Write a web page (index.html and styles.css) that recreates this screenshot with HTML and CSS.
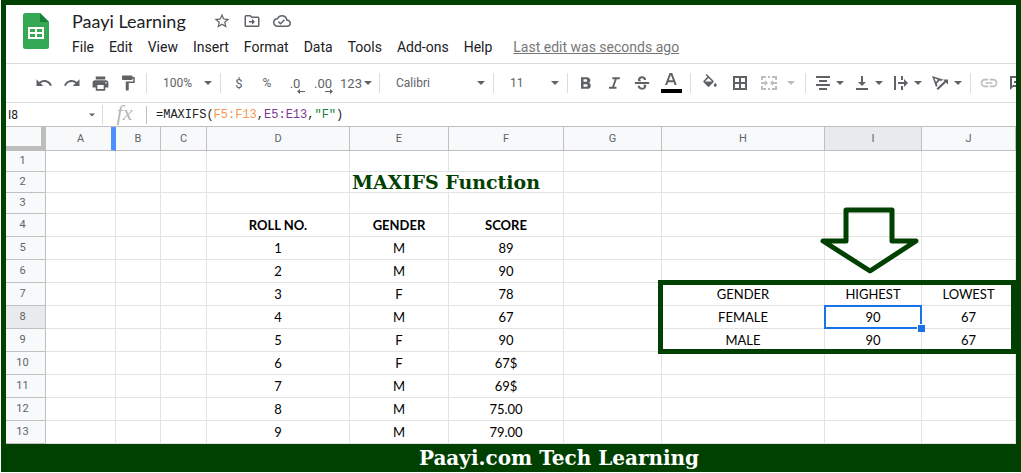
FILE: index.html
```html
<!DOCTYPE html>
<html lang="en">
<head>
<meta charset="utf-8">
<title>Paayi Learning</title>
<link rel="stylesheet" href="styles.css">
</head>
<body>
<svg class="defs" aria-hidden="true">
  <symbol id="caret" viewBox="0 0 8 4"><path d="M0 0h8L4 4z"/></symbol>
</svg>
<div class="frame">
  <header class="header">
    <svg class="logo" viewBox="0 0 26 36" aria-label="Sheets">
      <path fill="#34a853" d="M2.500 0H17l9 9v24.500a2.500 2.500 0 0 1-2.500 2.500h-21A2.500 2.500 0 0 1 0 33.500v-31A2.500 2.500 0 0 1 2.500 0z"/>
      <path fill="#188038" d="M17 0l9 9h-9z"/>
      <path fill="#fff" fill-rule="evenodd" d="M5 14h16v12H5zM7 16v3h5v-3zM14 16v3h5v-3zM7 21v3h5v-3zM14 21v3h5v-3z"/>
    </svg>
    <div class="heading">
      <div class="title-row">
        <input class="doc-title" type="text" value="Paayi Learning" aria-label="Document title">
        <button class="plain" aria-label="Star"><svg width="18" height="18" viewBox="0 0 24 24"><path d="M22 9.240l-7.190-.62L12 2 9.190 8.630 2 9.240l5.460 4.730L5.820 21 12 17.270 18.180 21l-1.630-7.030L22 9.240zM12 15.400l-3.760 2.270 1-4.280-3.320-2.880 4.380-.38L12 6.100l1.710 4.040 4.380.38-3.320 2.880 1 4.280L12 15.400z"/></svg></button>
        <button class="plain" aria-label="Move"><svg width="18" height="18" viewBox="0 0 24 24"><path d="M20 6h-8l-2-2H4a2 2 0 0 0-2 2v12a2 2 0 0 0 2 2h16a2 2 0 0 0 2-2V8a2 2 0 0 0-2-2zm0 12H4V6h5.200l2 2H20v10zM12 17l4-4-4-4v3H8v2h4z"/></svg></button>
        <button class="plain" aria-label="Saved"><svg width="18" height="18" viewBox="0 0 24 24"><path d="M19.350 10.040A7.490 7.490 0 0 0 12 4C9.110 4 6.600 5.640 5.350 8.040A5.994 5.994 0 0 0 0 14c0 3.310 2.690 6 6 6h13c2.760 0 5-2.240 5-5 0-2.640-2.050-4.780-4.650-4.960zM19 18H6c-2.210 0-4-1.790-4-4 0-2.050 1.530-3.760 3.560-3.970l1.070-.11.5-.95A5.469 5.469 0 0 1 12 6c2.620 0 4.880 1.860 5.390 4.430l.3 1.500 1.530.11A2.980 2.980 0 0 1 22 15c0 1.650-1.350 3-3 3zm-9-3.820l-2.090-2.090L6.500 13.500 10 17l6.010-6.010-1.410-1.410z"/></svg></button>
      </div>
      <nav class="menu">
        <button class="plain">File</button><button class="plain">Edit</button><button class="plain">View</button><button class="plain">Insert</button><button class="plain">Format</button><button class="plain">Data</button><button class="plain">Tools</button><button class="plain">Add-ons</button><button class="plain">Help</button>
        <a class="last-edit" href="#history">Last edit was seconds ago</a>
      </nav>
    </div>
  </header>

  <div class="toolbar" role="toolbar">
    <button class="tool" aria-label="Undo"><svg width="18" height="18" viewBox="0 0 24 24"><path d="M12.500 8c-2.650 0-5.050.99-6.900 2.600L2 7v9h9l-3.620-3.620c1.390-1.160 3.160-1.880 5.120-1.880 3.540 0 6.550 2.310 7.600 5.500l2.370-.78C21.080 11.030 17.150 8 12.500 8z"/></svg></button>
    <button class="tool" aria-label="Redo"><svg width="18" height="18" viewBox="0 0 24 24"><path d="M18.400 10.600C16.550 8.990 14.150 8 11.500 8c-4.650 0-8.580 3.030-9.960 7.220L3.900 16a8.002 8.002 0 0 1 7.600-5.500c1.950 0 3.730.72 5.120 1.880L13 16h9V7z"/></svg></button>
    <button class="tool" aria-label="Print"><svg width="19" height="19" viewBox="0 0 24 24"><path d="M19 8H5c-1.660 0-3 1.340-3 3v6h4v4h12v-4h4v-6c0-1.660-1.340-3-3-3zm-3 11H8v-5h8zm3-7a1 1 0 1 1 0-2 1 1 0 0 1 0 2zM18 3H6v4h12z"/></svg></button>
    <button class="tool" aria-label="Paint format"><svg width="18" height="18" viewBox="0 0 24 24"><path d="M18 4V3a1 1 0 0 0-1-1H5a1 1 0 0 0-1 1v4a1 1 0 0 0 1 1h12a1 1 0 0 0 1-1V6h1v4H9v11a1 1 0 0 0 1 1h2a1 1 0 0 0 1-1v-9h8V4z"/></svg></button>
    <span class="sep"></span>
    <label class="pick pick-small"><select aria-label="Zoom"><option>100%</option></select><svg class="caret"><use href="#caret"/></svg></label>
    <span class="sep"></span>
    <button class="tool">$</button>
    <button class="tool small">%</button>
    <button class="tool decimal" aria-label="Decrease decimals"><span>.0</span><svg class="dec-arrow" width="8" height="5" viewBox="0 0 8 5"><path d="M0 2.500L3 0v2h5v1H3v2z"/></svg></button>
    <button class="tool decimal" aria-label="Increase decimals"><span>.00</span><svg class="dec-arrow" width="8" height="5" viewBox="0 0 8 5"><path d="M8 2.500L5 0v2H0v1h5v2z"/></svg></button>
    <button class="tool formats">123<svg class="caret"><use href="#caret"/></svg></button>
    <span class="sep"></span>
    <label class="pick pick-font"><select aria-label="Font"><option>Calibri</option></select><svg class="caret"><use href="#caret"/></svg></label>
    <span class="sep"></span>
    <label class="pick pick-small"><select aria-label="Font size"><option>11</option></select><svg class="caret"><use href="#caret"/></svg></label>
    <span class="sep"></span>
    <button class="tool" aria-label="Bold"><svg width="20" height="20" viewBox="0 0 24 24"><path d="M15.600 11.790c.97-.67 1.650-1.770 1.650-2.790 0-2.260-1.750-4-4-4H6v14h8.040c2.090 0 3.710-1.700 3.710-3.790 0-1.520-.86-2.820-2.150-3.420zM9 7.500h3a1.500 1.500 0 0 1 0 3H9zm3.500 9H9v-3h3.500a1.500 1.500 0 0 1 0 3z"/></svg></button>
    <button class="tool" aria-label="Italic"><svg width="20" height="20" viewBox="0 0 24 24"><path d="M10 5v2.500h2.900l-3.200 9H6V19h9v-2.500h-2.900l3.200-9H19V5z"/></svg></button>
    <button class="tool" aria-label="Strikethrough"><svg width="16" height="16" viewBox="0 0 18 18"><path d="M1 8h16v2H1zM4.800 7C3.800 4 5.800 1.500 9 1.500c2.700 0 4.600 1.600 4.600 4.200h-2.500C11.100 4.400 10.300 3.600 9 3.600 7.400 3.600 6.700 4.800 7.200 6l1 1zM10.500 11h3c1 3-1.100 5.500-4.500 5.500-2.900 0-4.900-1.700-4.900-4.300h2.500c.1 1.400 1 2.200 2.400 2.200 1.700 0 2.600-1.100 2.100-2.400z"/></svg></button>
    <button class="tool wide" aria-label="Text color"><svg width="21" height="20" viewBox="0 0 21 20"><path fill-rule="evenodd" d="M8.500 0h2.700l4.600 12h-2.200l-1-2.800H7.100l-1 2.800H4zM7.800 7.300h4.100L9.850 2z"/><path fill="#000" d="M0 16h21v4H0z"/></svg></button>
    <span class="sep"></span>
    <button class="tool wide" aria-label="Fill color"><svg width="18" height="18" viewBox="0 0 24 24"><path d="M16.560 8.940L7.620 0 6.210 1.410l2.380 2.380-5.150 5.150a1.490 1.490 0 0 0 0 2.120l5.500 5.500a1.500 1.500 0 0 0 2.120 0l5.500-5.500c.59-.58.59-1.530 0-2.120zM5.210 10L10 5.210 14.790 10zM19 11.500s-2 2.170-2 3.500a2 2 0 1 0 4 0c0-1.330-2-3.500-2-3.500z"/></svg></button>
    <button class="tool wide" aria-label="Borders"><svg width="14" height="14" viewBox="0 0 14 14"><path fill-rule="evenodd" d="M0 0h14v14H0zM2 2v4h4V2zM8 2v4h4V2zM2 8v4h4V8zM8 8v4h4V8z"/></svg></button>
    <button class="tool merge" disabled aria-label="Merge cells"><svg width="16" height="14" viewBox="0 0 16 14"><path d="M0 0h5v2H2v2H0zM7 0h2v2H7zM11 0h5v4h-2V2h-3zM0 10h2v2h3v2H0zM7 12h2v2H7zM14 10h2v4h-5v-2h3zM0 6h4V4l3 3-3 3V8H0zM16 6h-4V4L9 7l3 3V8h4z"/></svg><svg class="caret"><use href="#caret"/></svg></button>
    <span class="sep"></span>
    <button class="tool drop" aria-label="Horizontal align"><svg width="14" height="14" viewBox="0 0 14 14"><path d="M0 0h14v2H0zM3 4h8v2H3zM0 8h14v2H0zM3 12h8v2H3z"/></svg><svg class="caret"><use href="#caret"/></svg></button>
    <button class="tool drop" aria-label="Vertical align"><svg width="14" height="14" viewBox="0 0 14 14"><path d="M1 12h12v2H1zM6 0h2v6h3l-4 4-4-4h3z"/></svg><svg class="caret"><use href="#caret"/></svg></button>
    <button class="tool drop" aria-label="Text wrapping"><svg width="14" height="14" viewBox="0 0 14 14"><path d="M0 0h2v14H0zM7 0h2v4H7zM7 10h2v4H7zM4 6h6V3l4 4-4 4V8H4z"/></svg><svg class="caret"><use href="#caret"/></svg></button>
    <button class="tool drop" aria-label="Text rotation"><svg width="16" height="14" viewBox="0 0 16 14"><path fill-rule="evenodd" d="M0 0l11 3.500-1.500 1.500-1.700-.5L4.800 7.500l.7 2L4 11zM2.300 2.300L4 6l2-2.300z"/><path d="M4.500 12.500L12.500 5 11 3.500h5V8.500L14 6.500 6 14z"/></svg><svg class="caret"><use href="#caret"/></svg></button>
    <span class="sep"></span>
    <button class="tool" disabled aria-label="Insert link"><svg width="20" height="20" viewBox="0 0 24 24"><path d="M3.900 12c0-1.710 1.390-3.100 3.100-3.100h4V7H7a5 5 0 0 0 0 10h4v-1.900H7c-1.710 0-3.100-1.390-3.100-3.100zM8 13h8v-2H8zm9-6h-4v1.900h4a3.100 3.100 0 0 1 0 6.200h-4V17h4a5 5 0 0 0 0-10z"/></svg></button>
    <button class="tool" aria-label="Insert comment"><svg width="16" height="16" viewBox="0 0 16 16"><path fill-rule="evenodd" d="M1 1h14v11H4l-3 3zM3 3v8l1-1h9V3zM5 6h6v2H5z"/></svg></button>
  </div>

  <div class="formula-bar">
    <label class="name-box"><input type="text" value="I8" aria-label="Name box"><svg class="caret tiny"><use href="#caret"/></svg></label>
    <span class="fx">fx</span>
    <div class="formula" contenteditable="true" role="textbox" aria-label="Formula" spellcheck="false">=MAXIFS(<span class="range-a">F5:F13</span>,<span class="range-b">E5:E13</span>,<span class="string">"F"</span>)</div>
  </div>

  <main class="sheet">
    <table class="grid">
      <colgroup><col class="c-num"><col class="c-a"><col class="c-b"><col class="c-c"><col class="c-d"><col class="c-e"><col class="c-f"><col class="c-g"><col class="c-h"><col class="c-i"><col></colgroup>
      <thead>
        <tr><td class="corner"></td><th class="frozen">A</th><th>B</th><th>C</th><th>D</th><th>E</th><th>F</th><th>G</th><th>H</th><th class="active">I</th><th>J</th></tr>
      </thead>
      <tbody>
        <tr class="short"><th>1</th><td></td><td></td><td></td><td></td><td></td><td></td><td></td><td></td><td></td><td></td></tr>
        <tr class="short"><th>2</th><td></td><td></td><td></td><td></td><td class="sheet-title" colspan="2">MAXIFS Function</td><td></td><td></td><td></td><td></td></tr>
        <tr class="short"><th>3</th><td></td><td></td><td></td><td></td><td></td><td></td><td></td><td></td><td></td><td></td></tr>
        <tr class="labels"><th>4</th><td></td><td></td><td></td><td>ROLL NO.</td><td>GENDER</td><td>SCORE</td><td></td><td></td><td></td><td></td></tr>
        <tr><th>5</th><td></td><td></td><td></td><td>1</td><td>M</td><td>89</td><td></td><td></td><td></td><td></td></tr>
        <tr><th>6</th><td></td><td></td><td></td><td>2</td><td>M</td><td>90</td><td></td><td></td><td></td><td></td></tr>
        <tr><th>7</th><td></td><td></td><td></td><td>3</td><td>F</td><td>78</td><td></td><td>GENDER</td><td>HIGHEST</td><td>LOWEST</td></tr>
        <tr><th class="active">8</th><td></td><td></td><td></td><td>4</td><td>M</td><td>67</td><td></td><td>FEMALE</td><td class="selected">90</td><td>67</td></tr>
        <tr><th>9</th><td></td><td></td><td></td><td>5</td><td>F</td><td>90</td><td></td><td>MALE</td><td>90</td><td>67</td></tr>
        <tr><th>10</th><td></td><td></td><td></td><td>6</td><td>F</td><td>67$</td><td></td><td></td><td></td><td></td></tr>
        <tr><th>11</th><td></td><td></td><td></td><td>7</td><td>M</td><td>69$</td><td></td><td></td><td></td><td></td></tr>
        <tr><th>12</th><td></td><td></td><td></td><td>8</td><td>M</td><td>75.00</td><td></td><td></td><td></td><td></td></tr>
        <tr><th>13</th><td></td><td></td><td></td><td>9</td><td>M</td><td>79.00</td><td></td><td></td><td></td><td></td></tr>
      </tbody>
    </table>
    <div class="result-box"></div>
    <svg class="pointer" width="100" height="68" viewBox="0 0 100 68"><path d="M26 3H72V34H96L50 64L3 34H26z"/></svg>
  </main>
  <footer class="banner">Paayi.com Tech Learning</footer>
</div>
</body>
</html>
```
FILE: styles.css
```css
* { box-sizing: border-box; }

body {
  margin: 0 0 0 1px;
  background: #fff;
  font-family: Roboto, sans-serif;
  color: #202124;
}

button, input, select { font: inherit; color: inherit; }

svg { fill: #5f6368; display: block; flex: none; }

.defs { width: 0; height: 0; position: absolute; }

.frame {
  border: 5px solid #004000;
  border-bottom: 0;
  overflow: hidden;
}

.plain {
  border: 0;
  padding: 0;
  background: none;
}

/* Document header */
.header {
  display: flex;
  gap: 23px;
  height: 59px;
  padding: 8px 17px 0;
  border-bottom: 1px solid #dadce0;
}

.logo { width: 26px; height: 36px; }

.title-row {
  display: flex;
  align-items: center;
  gap: 12px;
  height: 16px;
}

.doc-title {
  width: 129px;
  height: 24px;
  padding: 0;
  border: 0;
  outline: 0;
  background: none;
  font-family: Lato, sans-serif;
  font-size: 18px;
}

.menu {
  display: flex;
  gap: 15px;
  margin-top: 9px;
  font-size: 14px;
  line-height: 18px;
}

.last-edit {
  margin-left: 6px;
  color: #777;
}

/* Toolbar */
.toolbar {
  display: flex;
  align-items: center;
  height: 39px;
  padding-left: 24px;
  border-bottom: 1px solid #dadce0;
  color: #5f6368;
  font-size: 12px;
  overflow: hidden;
}

.tool {
  display: flex;
  flex: none;
  align-items: center;
  justify-content: center;
  width: 28px;
  height: 28px;
  padding: 0;
  border: 0;
  background: none;
  font-size: 13px;
}

.tool:disabled svg { fill: #bdbdbd; }

.small { font-size: 12px; }
.wide { width: 30px; }

.sep {
  flex: none;
  width: 1px;
  height: 20px;
  margin: 0 4px;
  background: #dadce0;
}

.caret { width: 8px; height: 4px; }

.tiny { width: 6px; height: 4px; }

.pick {
  display: grid;
  flex: none;
  grid-template-columns: 1fr 12px;
  align-items: center;
}

.pick select {
  grid-area: 1 / 1 / 2 / 3;
  height: 24px;
  padding: 0 0 0 12px;
  border: 0;
  background: none;
  appearance: none;
}

.pick .caret { grid-area: 1 / 2; pointer-events: none; }

.pick-small { width: 65px; }
.pick-font { width: 105px; }

.decimal { position: relative; }

.dec-arrow {
  position: absolute;
  right: 4px;
  bottom: 3px;
}

.formats { width: 38px; gap: 2px; }
.merge { width: 46px; gap: 10px; }
.drop { width: 39px; gap: 6px; }

/* Formula bar */
.formula-bar {
  display: flex;
  align-items: center;
  height: 24px;
  border-bottom: 1px solid #c0c0c0;
}

.name-box {
  display: flex;
  align-items: center;
  width: 97px;
  height: 20px;
  padding: 0 7px 0 2px;
  border-right: 1px solid #dadce0;
  font-size: 12px;
}

.name-box input {
  flex: 1;
  min-width: 0;
  padding: 0;
  border: 0;
  outline: 0;
  background: none;
}

.fx {
  width: 44px;
  height: 18px;
  border-right: 1px solid #c0c0c0;
  color: #b7b7b7;
  font: italic 22px/14px "Liberation Serif", serif;
  text-align: center;
}

.formula {
  flex: 1;
  padding-left: 9px;
  outline: 0;
  font-family: "Liberation Mono", monospace;
  font-size: 12px;
}

.range-a { color: #f79850; }
.range-b { color: #7e3794; }
.string { color: #188038; }

/* Spreadsheet */
.sheet { position: relative; }

.grid {
  width: 100%;
  table-layout: fixed;
  border-spacing: 0;
  font-family: Lato, sans-serif;
  font-size: 13px;
  line-height: 16px;
  color: #000;
  text-align: center;
}

.c-num { width: 40px; }
.c-a { width: 70px; }
.c-b { width: 45px; }
.c-c { width: 46px; }
.c-d { width: 143px; }
.c-e { width: 99px; }
.c-f { width: 115px; }
.c-g { width: 98px; }
.c-h { width: 163px; }
.c-i { width: 97px; }

.grid td,
.grid th {
  height: 23px;
  padding: 0;
  border-right: 1px solid #e2e3e3;
  border-bottom: 1px solid #e2e3e3;
}

.grid th {
  border-color: #c0c0c0;
  background: #f8f9fa;
  color: #5f6368;
  font: 11px/14px Roboto, sans-serif;
}

.grid tbody th { padding-right: 6px; }

.grid thead td,
.grid thead th { height: 24px; }

.grid .short td,
.grid .short th { height: 21px; }

.grid .active { background: #e8eaed; }

.grid .corner {
  border-right: 5px solid #bdbdbd;
  border-bottom: 5px solid #bdbdbd;
  background: #f8f9fa;
}

.grid .frozen {
  padding-left: 4px;
  border-right: 5px solid #4d90fe;
}

.labels td { font-weight: bold; }

.grid .sheet-title {
  padding-left: 2px;
  color: #004000;
  font: bold 19px/20px "DejaVu Serif", serif;
  text-align: left;
  white-space: nowrap;
}

.selected { position: relative; }

.selected::before {
  content: "";
  position: absolute;
  inset: -1px;
  border: 2px solid #1a73e8;
}

.selected::after {
  content: "";
  position: absolute;
  right: -4px;
  bottom: -4px;
  width: 7px;
  height: 7px;
  border: 1px solid #fff;
  border-width: 1px 0 0 1px;
  background: #1a73e8;
}

/* Annotations drawn over the cells */
.result-box {
  position: absolute;
  top: 153px;
  left: 652px;
  right: 0;
  height: 74px;
  border: 5px solid #004000;
  pointer-events: none;
}

.pointer {
  position: absolute;
  top: 80px;
  left: 814px;
  fill: none;
  stroke: #004000;
  stroke-width: 5;
  stroke-linejoin: round;
}

.banner {
  height: 28px;
  padding-left: 96px;
  background: #004000;
  color: #fff;
  font: bold 20px/28px "DejaVu Serif", serif;
  text-align: center;
}
```
